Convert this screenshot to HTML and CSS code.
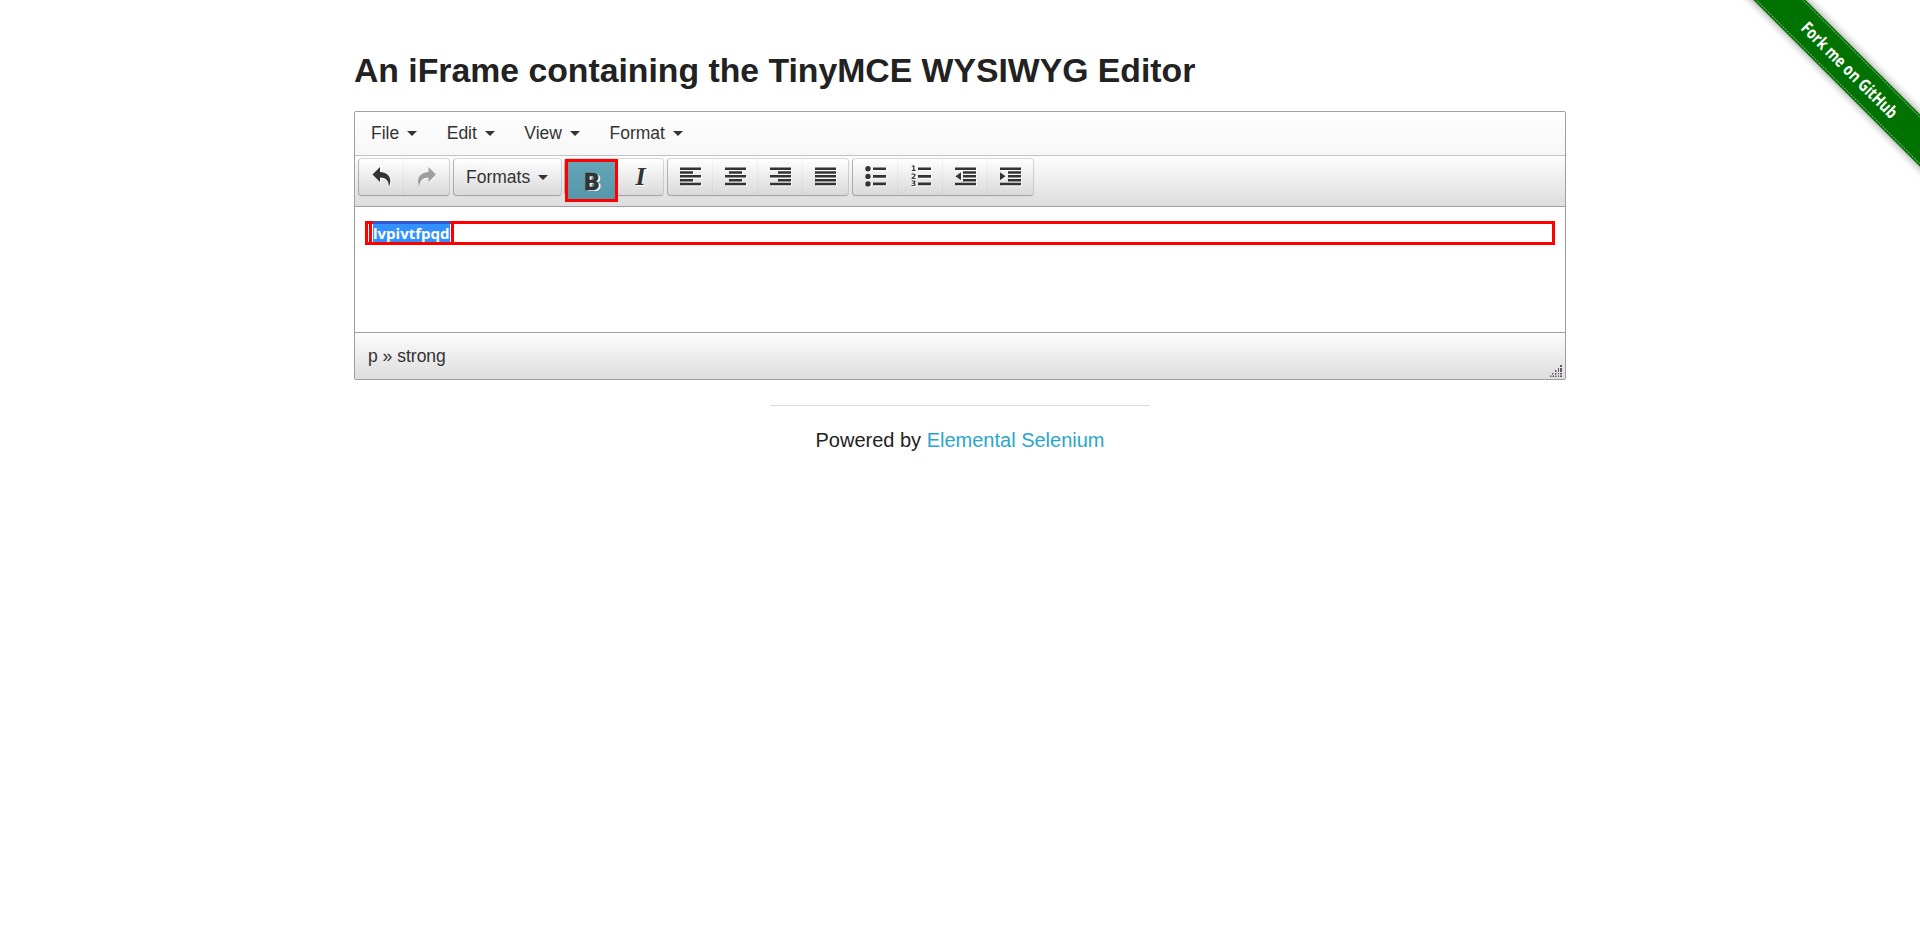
FILE: index.html
```html
<!DOCTYPE html>
<html lang="en">
<head>
<meta charset="utf-8">
<title>The Internet</title>
<link rel="stylesheet" href="styles.css">
</head>
<body>
<svg class="ribbon" width="180" height="180" viewBox="0 0 180 180">
  <defs><filter id="soft" x="-20%" y="-100%" width="140%" height="300%"><feGaussianBlur stdDeviation="4"/></filter></defs>
  <g transform="translate(109.5 70) rotate(45)">
    <rect x="-150" y="-19" width="300" height="38" fill="#000" opacity=".4" filter="url(#soft)"/>
    <rect x="-150" y="-18.5" width="300" height="37" fill="#007200"/>
    <path d="M-150-16.5H150M-150 16.5H150" stroke="#67ac67" stroke-width="1.1" stroke-dasharray="2 1"/>
    <text class="ribbon-text" x="0" y="6" text-anchor="middle" textLength="128" lengthAdjust="spacingAndGlyphs">Fork me on GitHub</text>
  </g>
</svg>
<main class="content">
  <h3 class="title">An iFrame containing the TinyMCE WYSIWYG Editor</h3>
  <section class="editor">
    <nav class="menubar">
      <span class="menu">File<i class="caret"></i></span>
      <span class="menu">Edit<i class="caret"></i></span>
      <span class="menu">View<i class="caret"></i></span>
      <span class="menu">Format<i class="caret"></i></span>
    </nav>
    <div class="toolbar">
      <div class="group">
        <span class="btn"><svg class="icon" width="22" height="22"><path d="M1.500 8.500 9 1v5c7.500 0 13 6 9 14.500C18 14.500 14.500 11.500 9 11.500v4.500z"/></svg></span>
        <span class="btn disabled"><svg class="icon" width="22" height="22"><path d="M20 8.500 12.500 1v5C5 6-.5 12 3.500 20.500 3.500 14.500 7 11.500 12.500 11.500v4.500z"/></svg></span>
      </div>
      <div class="group formats"><span>Formats</span><i class="caret"></i></div>
      <div class="group styles">
        <span class="btn bold-btn"><span class="bold-glyph">B</span></span>
        <span class="btn"><span class="italic-glyph">I</span></span>
      </div>
      <div class="group">
        <span class="btn"><svg class="icon" width="22" height="22"><path d="M0 1.500h21v2.500H0zM0 5.300h13v2.500H0zM0 9.100h21v2.500H0zM0 12.900h13v2.500H0zM0 16.700h21v2.500H0z"/></svg></span>
        <span class="btn"><svg class="icon" width="22" height="22"><path d="M0 1.500h21v2.500H0zM4 5.300h13v2.500H4zM0 9.100h21v2.500H0zM4 12.900h13v2.500H4zM0 16.700h21v2.500H0z"/></svg></span>
        <span class="btn"><svg class="icon" width="22" height="22"><path d="M0 1.500h21v2.500H0zM8 5.300h13v2.500H8zM0 9.100h21v2.500H0zM8 12.900h13v2.500H8zM0 16.700h21v2.500H0z"/></svg></span>
        <span class="btn"><svg class="icon" width="22" height="22"><path d="M0 1.500h21v2.500H0zM0 5.300h21v2.500H0zM0 9.100h21v2.500H0zM0 12.900h21v2.500H0zM0 16.700h21v2.500H0z"/></svg></span>
      </div>
      <div class="group">
        <span class="btn"><svg class="icon" width="22" height="22"><path d="M8 1.500h13v2.600H8zM8 9.100h13v2.600H8zM8 16.600h13v2.600H8z"/><circle cx="3" cy="2.800" r="2.700"/><circle cx="3" cy="10.400" r="2.700"/><circle cx="3" cy="17.900" r="2.700"/></svg></span>
        <span class="btn"><svg class="icon" width="22" height="22"><path d="M8 1.500h13v2.600H8zM8 9.100h13v2.600H8zM8 16.600h13v2.600H8z"/><g class="numbers"><text x="1" y="5.300">1</text><text x="1" y="12.900">2</text><text x="1" y="20.400">3</text></g></svg></span>
        <span class="btn"><svg class="icon" width="22" height="22"><path d="M0 1.500h21v2.500H0zM8 5.300h13v2.500H8zM8 9.100h13v2.500H8zM8 12.900h13v2.500H8zM0 16.700h21v2.500H0zM6 6.300v8L0.500 10.300z"/></svg></span>
        <span class="btn"><svg class="icon" width="22" height="22"><path d="M0 1.500h21v2.500H0zM8 5.300h13v2.500H8zM8 9.100h13v2.500H8zM8 12.900h13v2.500H8zM0 16.700h21v2.500H0zM0 6.300v8l5.500-4z"/></svg></span>
      </div>
    </div>
    <div class="edit-area">
      <p class="paragraph"><strong class="selected-box"><span class="selection">lvpivtfpqd</span></strong></p>
    </div>
    <footer class="statusbar">
      <span class="path">p » strong</span>
      <svg class="grip" width="12" height="12"><path d="M10 0h2v2h-2zM8 3h1v2H8zM10 3h2v2h-2zM5 5h1.500v2H5zM8 5h1v2H8zM10 5h2v2h-2zM2 8h1.500v1.500H2zM5 8h1.500v1.500H5zM8 8h1v1.500H8zM10 8h2v1.500h-2zM0 10.500h1.500V12H0zM2.500 10.500H4V12H2.500zM5 10.500h1.500V12H5zM8 10.500h1V12H8zM10 10.500h2V12h-2z"/></svg>
    </footer>
  </section>
  <div class="powered">Powered by <a class="link">Elemental Selenium</a></div>
</main>
</body>
</html>
```

FILE: styles.css
```css
body { margin: 0; background: #fff; color: #222; font-family: "Liberation Sans", Arial, sans-serif; }
.ribbon { position: absolute; top: 0; right: 0; }
.ribbon-text { font: 700 17px "Noto Sans", sans-serif; fill: #fff; }
.content { width: 1212px; margin: 0 auto; padding-top: 46px; display: flex; flex-direction: column; }
.title { margin: 0 0 16px; height: 49px; line-height: 49px; font-size: 33.75px; font-weight: 700; white-space: nowrap; }
.editor { box-sizing: border-box; height: 269px; border: 1px solid #9e9e9e; border-radius: 2px; overflow: hidden; color: #333; font-size: 17.5px; display: flex; flex-direction: column; }
.menubar { box-sizing: border-box; flex: none; height: 44px; border-bottom: 1px solid #c3c3c3; background: linear-gradient(#fefefe, #f7f7f7); display: flex; align-items: center; gap: 29.5px; padding-left: 16px; }
.menu { display: flex; align-items: center; gap: 8px; height: 40px; }
.caret { width: 0; height: 0; border: 5px solid transparent; border-top-color: #333; border-bottom: 0; }
.toolbar { box-sizing: border-box; flex: none; height: 51px; padding: 2px 3px; display: flex; align-items: flex-start; gap: 3px; background: linear-gradient(#fdfdfd, #ddd); border-bottom: 1px solid #9e9e9e; }
.group { box-sizing: border-box; height: 38px; display: flex; border: 1px solid; border-color: rgba(0,0,0,.14) rgba(0,0,0,.14) rgba(0,0,0,.27) rgba(0,0,0,.27); border-radius: 4px; background: linear-gradient(#fff, #d9d9d9); background-clip: padding-box; box-shadow: 0 1px 2px rgba(0,0,0,.05); }
.btn { box-sizing: border-box; width: 45px; height: 36px; padding: 7px 0 0 12px; border-right: 1px solid rgba(0,0,0,.035); }
.btn:last-child { border-right: 0; }
.icon { display: block; overflow: visible; fill: #333; filter: drop-shadow(1px 1px 0 #fff); }
.disabled .icon { opacity: .42; }
.formats { width: 109px; align-items: center; padding-left: 12px; gap: 8px; }
.styles { margin-left: -1px; }
.bold-btn { width: 53px; height: 43px; border: 3px solid #f00; background: linear-gradient(#64a6b8, #5697a9); padding: 0; display: flex; justify-content: center; align-items: center; }
.bold-btn + .btn { padding: 0; display: flex; justify-content: center; }
.bold-glyph { font: 700 24px/30px "Open Sans", sans-serif; -webkit-text-stroke: .6px #333; text-shadow: 2px 1px #fff; }
.italic-glyph { font: italic 700 26px/36px "Liberation Serif", serif; text-shadow: 1px 1px #fff; }
.numbers { font: 700 7.5px "DejaVu Sans", sans-serif; }
.edit-area { box-sizing: border-box; flex: none; height: 126px; border-bottom: 1px solid #9e9e9e; padding: 14px 10px 0; background: #fff; }
.paragraph { box-sizing: border-box; height: 24px; margin: 0; border: 3px solid #f00; display: flex; align-items: flex-start; padding-left: 1px; }
.selected-box { display: flex; height: 18px; border: solid #f00; border-width: 0 3px; padding: 0 1px; }
.selection { height: 18px; width: 77px; margin-top: -3px; border-top: 3px solid #3457d5; background: #3390ff; color: #fff; font: 700 15px/18px "Open Sans", sans-serif; white-space: nowrap; }
.statusbar { height: 46px; display: flex; align-items: center; justify-content: space-between; padding: 0 3px 0 13px; background: linear-gradient(#fdfdfd, #ddd); }
.path { line-height: 46px; }
.grip { align-self: flex-end; margin-bottom: 2px; fill: #625863; }
.powered { width: 380px; margin: 25px auto 0; border-top: 1px solid #ddd; padding-top: 18px; text-align: center; font-size: 20px; line-height: 32px; }
.link { color: #2ba6cb; }
```
